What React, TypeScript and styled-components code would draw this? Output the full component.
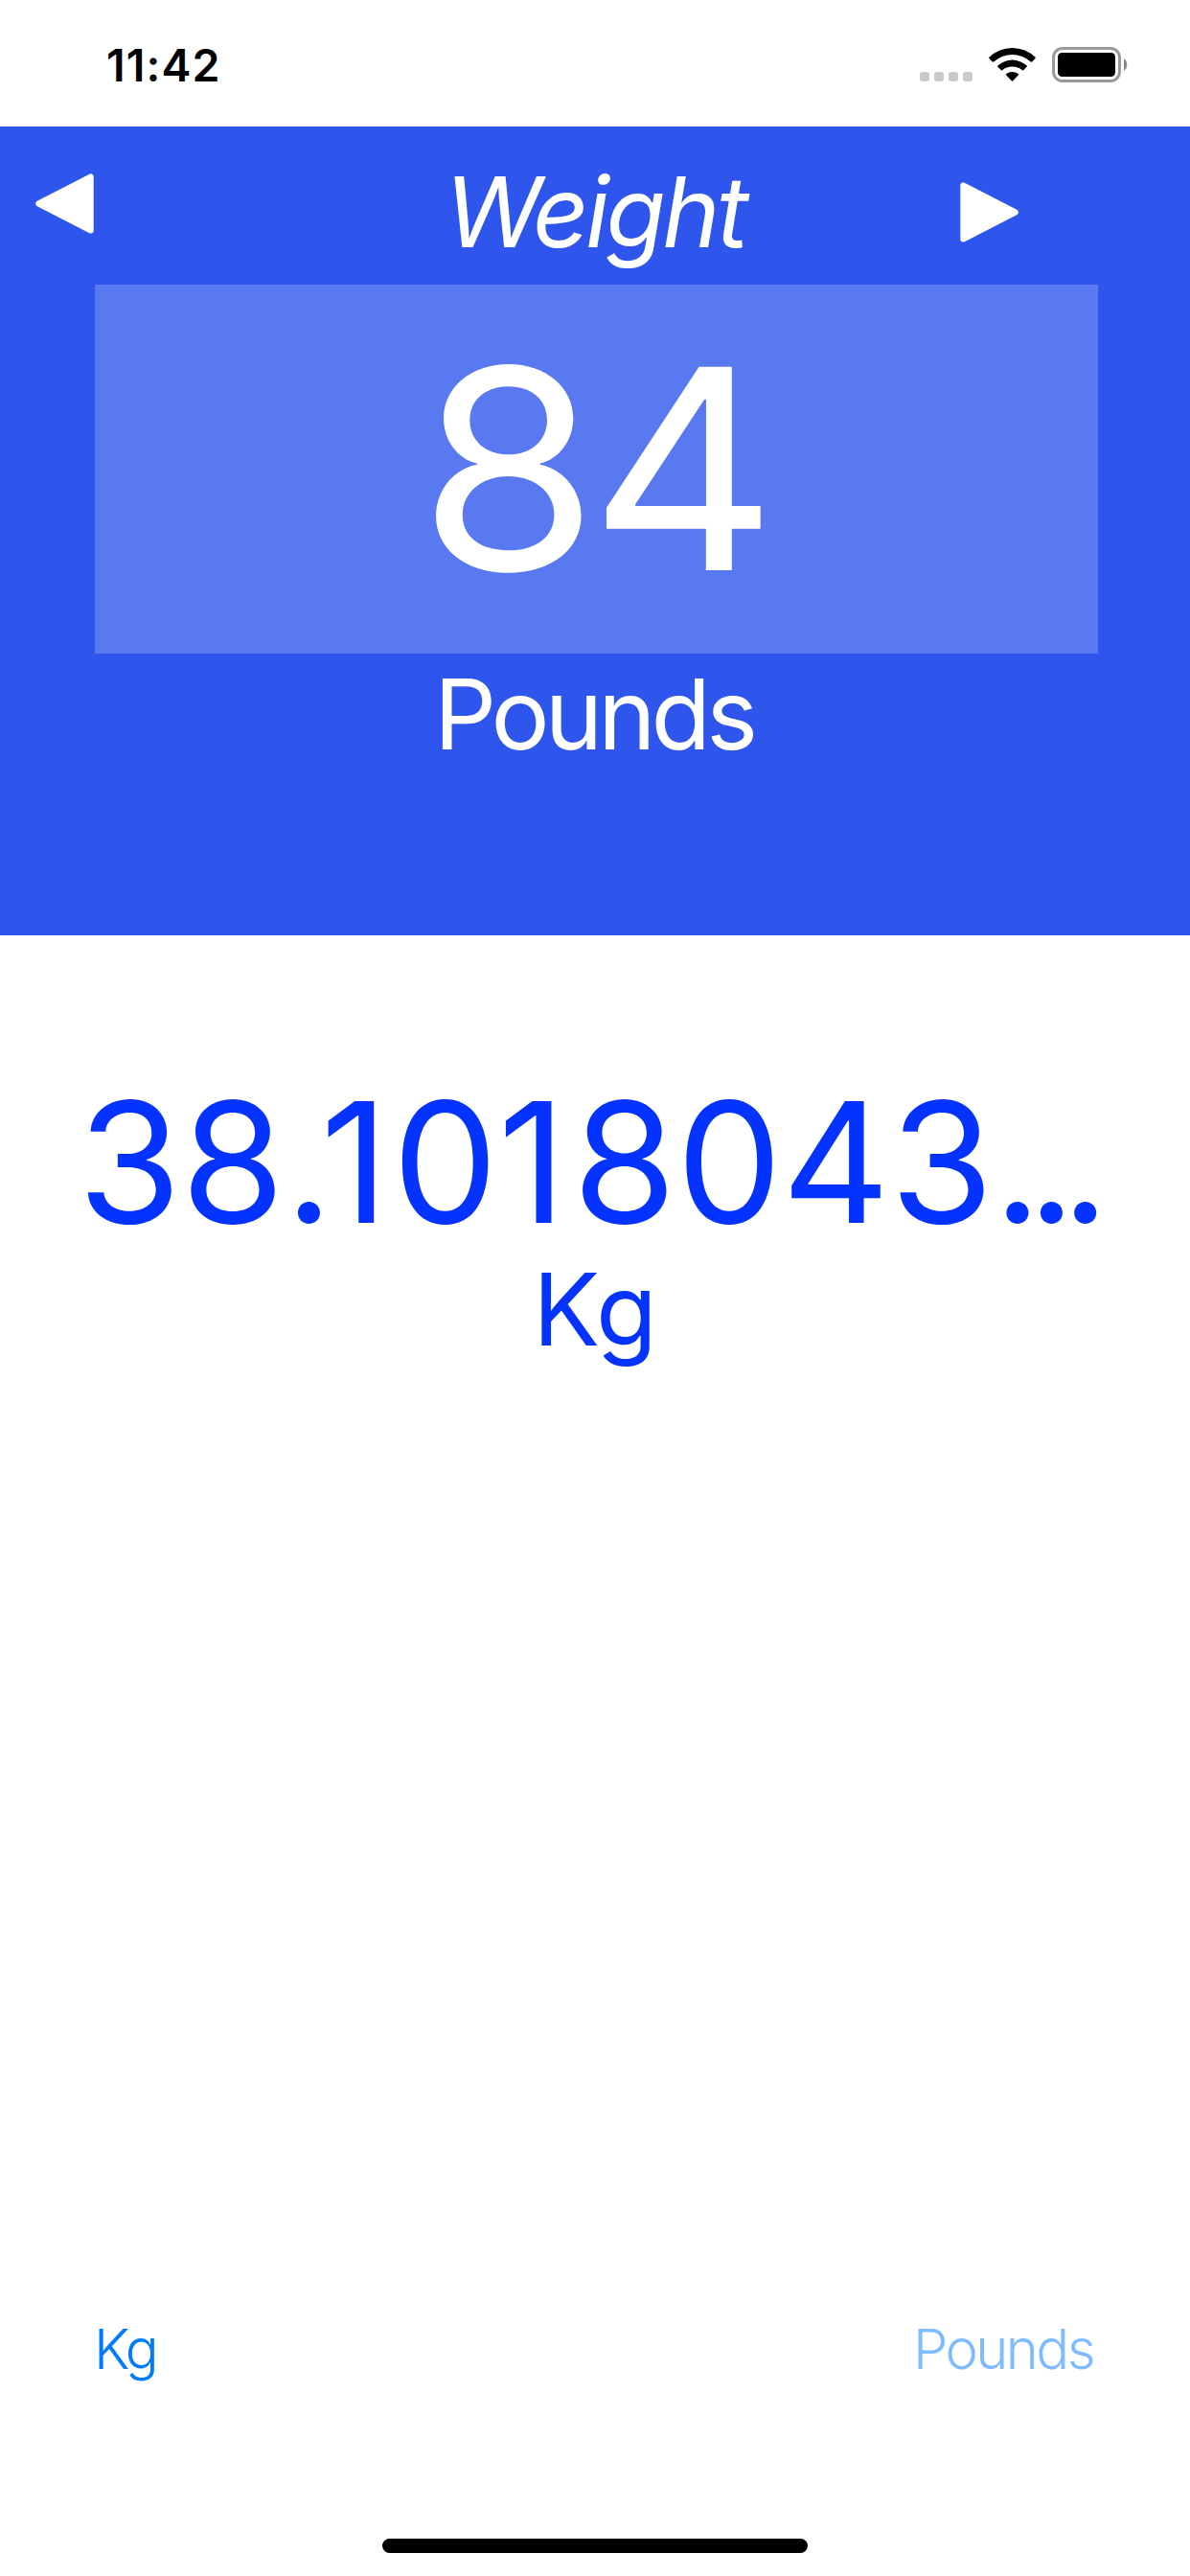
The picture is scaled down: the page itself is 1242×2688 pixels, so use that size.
import React from 'react';
import styled, { createGlobalStyle } from 'styled-components';

const GlobalStyle = createGlobalStyle`
  * { box-sizing: border-box; }
  body { margin: 0; background: #fff; }
`;

const Screen = styled.div`
  display: flex;
  flex-direction: column;
  width: 1242px;
  height: 2688px;
  overflow: hidden;
  background: #fff;
  font-family: Inter, 'Liberation Sans', sans-serif;
`;

const StatusBar = styled.header`
  display: flex;
  justify-content: space-between;
  height: 132px;
  padding: 49px 65px 0 111px;
`;

const Time = styled.time`
  height: 38px;
  line-height: 38px;
  font-size: 46.5px;
  font-weight: 600;
  letter-spacing: 1.1px;
  white-space: nowrap;
  color: #000;
`;

const StatusIcons = styled.div`
  display: flex;
  align-items: flex-start;
  height: 37px;
`;

const CellDots = styled.div`
  display: flex;
  gap: 5px;
  margin: 26px 17px 0 0;
`;

const CellDot = styled.span`
  width: 10px;
  height: 10px;
  border-radius: 3px;
  background: #cbcbcb;
`;

const WifiIcon = styled.svg`
  display: block;
  width: 49px;
  height: 36px;
  margin-right: 17px;
`;

const BatteryIcon = styled.svg`
  display: block;
  width: 79px;
  height: 37px;
`;

const InputPanel = styled.section`
  display: flex;
  flex-direction: column;
  align-items: center;
  height: 844px;
  background: #2f56ec;
  color: #fff;
`;

const TitleRow = styled.div`
  display: flex;
  align-items: flex-start;
  justify-content: space-between;
  width: 100%;
  height: 165px;
  padding: 0 179px 0 37px;
`;

const ArrowButton = styled.button<{ $top: number }>`
  width: 61px;
  height: 63px;
  margin: ${(p) => p.$top}px 0 0;
  padding: 0;
  border: 0;
  background: none;
`;

const ArrowIcon = styled.svg`
  display: block;
  width: 61px;
  height: 63px;
  fill: #fff;
  stroke: #fff;
  stroke-width: 6;
  stroke-linejoin: round;
`;

const Title = styled.h1`
  width: 700px;
  margin: 29px 0 0 0;
  padding-left: 142px;
  font-size: 102px;
  line-height: 120px;
  font-weight: 400;
  font-style: italic;
  letter-spacing: -3.6px;
  text-align: center;
`;

const ValueField = styled.div`
  display: flex;
  justify-content: center;
  width: 1047px;
  height: 385px;
  margin-left: 3px;
  background: #5979f0;
`;

const Value = styled.span`
  margin-left: -6px;
  font-size: 291.6px;
  line-height: 384px;
  letter-spacing: -9px;
  transform: scaleX(1.04);
`;

const UnitLabel = styled.div`
  margin: 3px 3px 0 0;
  font-size: 102px;
  line-height: 120px;
  letter-spacing: -4.9px;
`;

const ResultPanel = styled.section`
  display: flex;
  flex-direction: column;
  align-items: center;
  height: 1384px;
  padding-top: 157px;
  color: #0433ff;
`;

const ResultValue = styled.output`
  margin-right: 18px;
  font-size: 174.7px;
  line-height: 160px;
  font-kerning: none;
  white-space: nowrap;
`;

const Spaced = styled.span<{ $by: number }>`
  letter-spacing: ${(p) => p.$by}px;
`;

const ResultUnit = styled.div`
  margin-top: 13px;
  font-size: 104px;
  line-height: 120px;
`;

const UnitBar = styled.nav`
  display: flex;
  justify-content: space-between;
  height: 289px;
  padding: 56px 101px 0 98px;
`;

const UnitButton = styled.button<{ $dimmed?: boolean }>`
  height: 70px;
  margin: 0;
  padding: 0;
  border: 0;
  background: none;
  font: 300 58px/70px Inter, 'Liberation Sans', sans-serif;
  letter-spacing: -2.6px;
  color: ${(p) => (p.$dimmed ? '#7fbcff' : '#007aff')};
`;

const HomeIndicator = styled.div`
  flex: none;
  align-self: center;
  width: 444px;
  height: 15px;
  border-radius: 8px;
  background: #000;
`;

export default function App() {
  return (
    <>
      <GlobalStyle />
      <Screen>
        <StatusBar>
          <Time>11:42</Time>
          <StatusIcons>
            <CellDots>
              <CellDot />
              <CellDot />
              <CellDot />
              <CellDot />
            </CellDots>
            <WifiIcon viewBox="0 0 49 36">
              <path d="M.4 10.8A34.5 34.5 0 0 1 48.6 10.8Q49 11.4 48.5 11.9L45.1 15.4Q44.5 16 43.9 15.4A29 29 0 0 0 5.1 15.4Q4.5 16 3.9 15.4L.5 11.9Q0 11.4.4 10.8Z" />
              <path d="M9.2 19.6A22.5 22.5 0 0 1 39.8 19.6Q40.3 20.1 39.8 20.6L36.1 24.3Q35.6 24.8 35 24.3A16.5 16.5 0 0 0 14 24.3Q13.4 24.8 12.9 24.3L9.2 20.6Q8.7 20.1 9.2 19.6Z" />
              <path d="M18 28.3A10.4 10.4 0 0 1 31 28.3Q31.5 28.8 31 29.3L25 35.4Q24.5 35.9 24 35.4L18 29.3Q17.5 28.8 18 28.3Z" />
            </WifiIcon>
            <BatteryIcon viewBox="0 0 79 37">
              <rect x="1.5" y="1.5" width="69" height="34" rx="9.5" fill="none" stroke="#999" strokeWidth="3" />
              <rect x="6" y="6" width="60" height="25" rx="4.5" />
              <path d="M75 12A8 8 0 0 1 75 25Z" fill="#8c8c8c" />
            </BatteryIcon>
          </StatusIcons>
        </StatusBar>

        <InputPanel>
          <TitleRow>
            <ArrowButton $top={49} aria-label="Previous">
              <ArrowIcon viewBox="0 0 61 63">
                <path d="M3.2 31.5L57.7 3.4V59.6Z" />
              </ArrowIcon>
            </ArrowButton>
            <Title>Weight</Title>
            <ArrowButton $top={58} aria-label="Next">
              <ArrowIcon viewBox="0 0 61 63">
                <path d="M57.8 31.5L3.3 3.4V59.6Z" />
              </ArrowIcon>
            </ArrowButton>
          </TitleRow>
          <ValueField>
            <Value>84</Value>
          </ValueField>
          <UnitLabel>Pounds</UnitLabel>
        </InputPanel>

        <ResultPanel>
          <ResultValue>
            38<Spaced $by={-13}>.</Spaced>
            <Spaced $by={4}>1</Spaced>0<Spaced $by={7}>1</Spaced>8043
            <Spaced $by={-15}>...</Spaced>
          </ResultValue>
          <ResultUnit>Kg</ResultUnit>
        </ResultPanel>

        <UnitBar>
          <UnitButton>Kg</UnitButton>
          <UnitButton $dimmed>Pounds</UnitButton>
        </UnitBar>
        <HomeIndicator />
      </Screen>
    </>
  );
}
